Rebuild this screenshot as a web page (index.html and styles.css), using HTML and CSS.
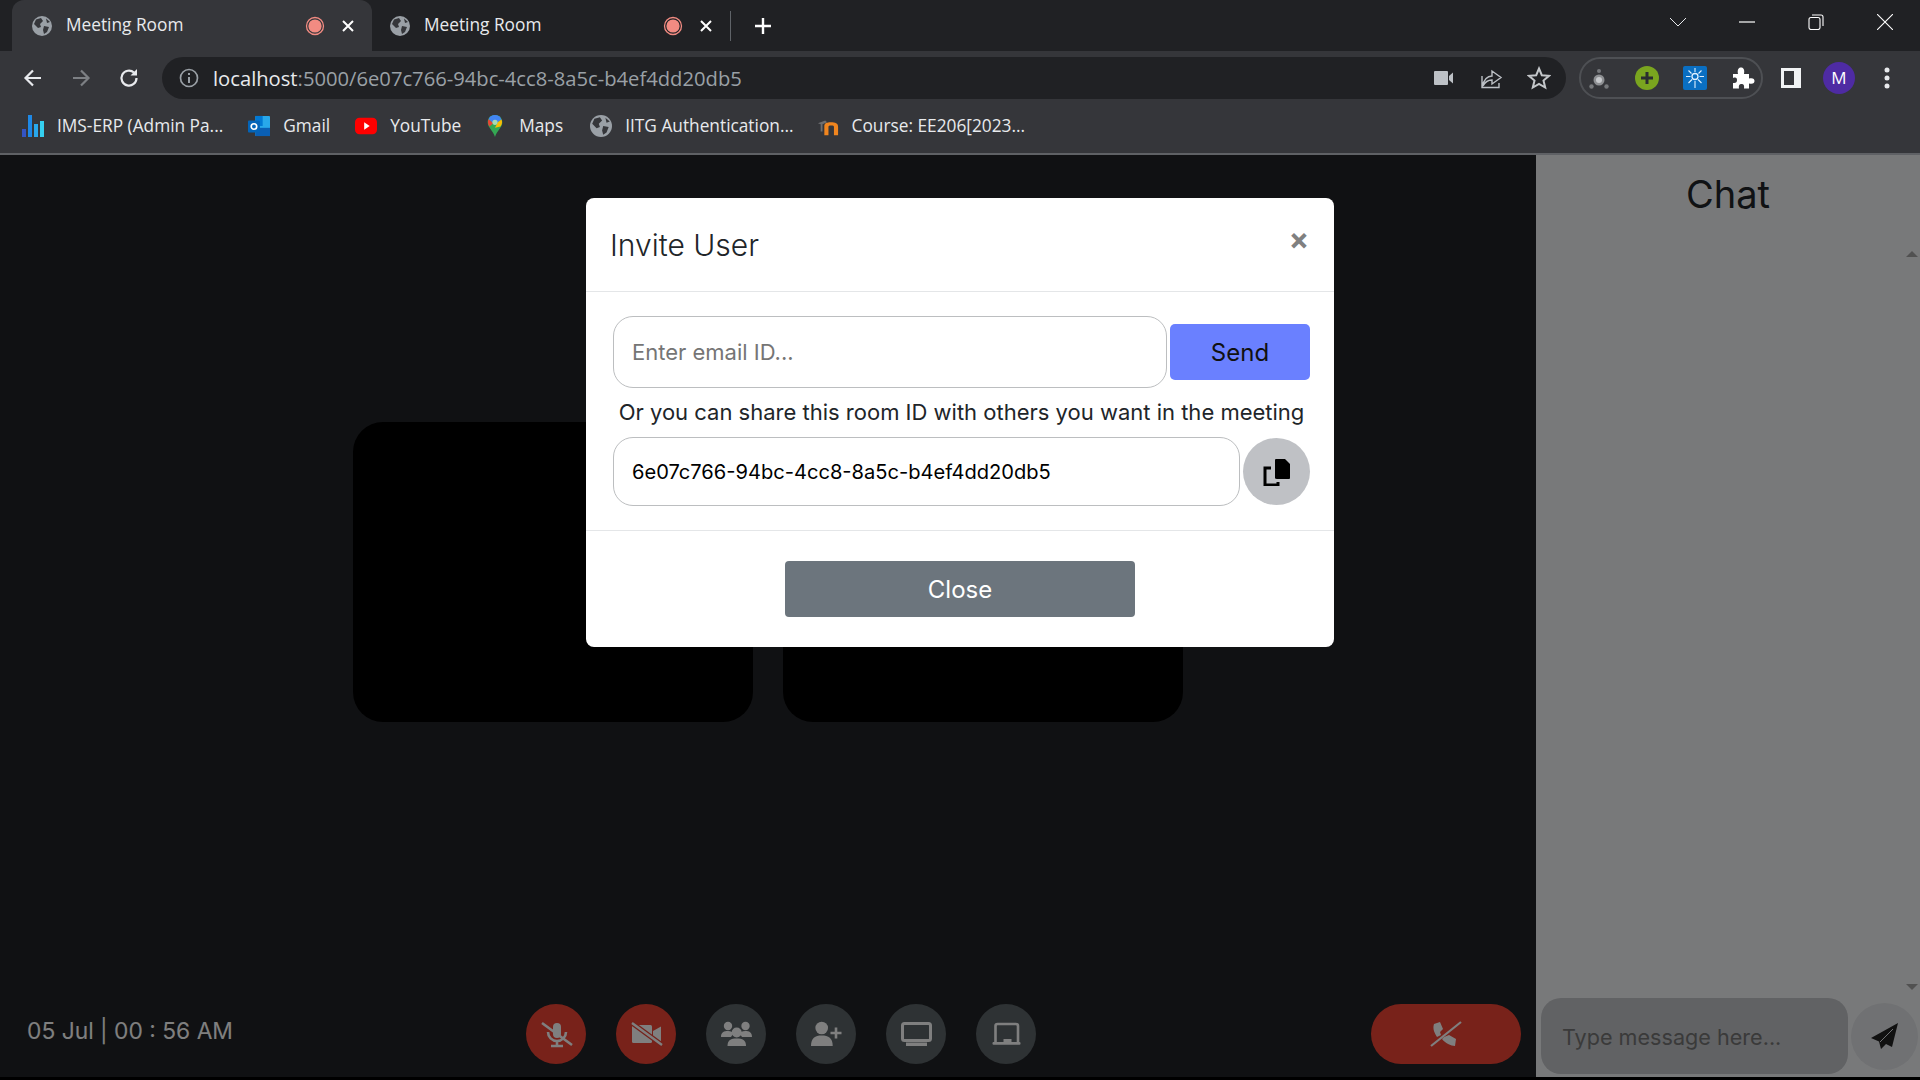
FILE: index.html
```html
<!DOCTYPE html>
<html>
<head>
    <meta charset="UTF-8">
    <title>Meeting Room</title>
    <link rel="stylesheet" href="styles.css">
</head>
<body>

<svg class="defs" width="0" height="0">
    <symbol id="globe" viewBox="0 0 20 20">
        <circle cx="10" cy="10" r="10" fill="#9aa0a6"/>
        <path d="M4 3.5 L9 2 L11 5 L8 8 L9 11 L6 12 L2 8 Z M12 10 L17 11 L15 16 L12 18 L11 14 Z M14 2.5 L18 6 L15 7 Z" fill="#35363a"/>
    </symbol>
    <symbol id="rec" viewBox="0 0 20 20">
        <circle cx="10" cy="10" r="8.5" fill="none" stroke="#f28b82" stroke-width="1.3"/>
        <circle cx="10" cy="10" r="6.6" fill="#f28b82"/>
    </symbol>
    <symbol id="tabx" viewBox="0 0 14 14">
        <path d="M2 2 L12 12 M12 2 L2 12" stroke="#fff" stroke-width="2" fill="none"/>
    </symbol>
</svg>

<div class="tabstrip">
    <div class="tab tab-active">
        <svg class="favicon"><use href="#globe"/></svg>
        <span class="tab-title">Meeting Room</span>
        <svg class="tab-rec"><use href="#rec"/></svg>
        <svg class="tab-close"><use href="#tabx"/></svg>
    </div>
    <div class="tab">
        <svg class="favicon"><use href="#globe"/></svg>
        <span class="tab-title">Meeting Room</span>
        <svg class="tab-rec"><use href="#rec"/></svg>
        <svg class="tab-close"><use href="#tabx"/></svg>
    </div>
    <div class="tab-sep"></div>
    <svg class="new-tab" viewBox="0 0 18 18"><path d="M9 1 V17 M1 9 H17" stroke="#fff" stroke-width="2.4"/></svg>
    <div class="window-btns">
        <svg class="win-btn" viewBox="0 0 16 16"><path d="M0 4 L8 12 L16 4" fill="none" stroke="#e8eaed"/></svg>
        <svg class="win-btn" viewBox="0 0 16 16"><path d="M0 8 H16" stroke="#fff" stroke-width="1.2"/></svg>
        <svg class="win-btn" viewBox="0 0 16 16"><rect x="1" y="3.5" width="11" height="12" rx="2" fill="none" stroke="#fff" stroke-width="1.1"/><path d="M4 1 H13 Q15 1 15 3 V12" fill="none" stroke="#fff" stroke-width="1.1"/></svg>
        <svg class="win-btn" viewBox="0 0 16 16"><path d="M0 0 L16 16 M16 0 L0 16" stroke="#fff" stroke-width="1.1"/></svg>
    </div>
</div>

<div class="toolbar">
    <svg class="tool-icon" viewBox="0 0 24 24"><path d="M20 12 H5 M12 4.5 L4.5 12 L12 19.500" fill="none" stroke="#e8eaed" stroke-width="2.2"/></svg>
    <svg class="tool-icon" viewBox="0 0 24 24"><path d="M4 12 H19 M12 4.5 L19.500 12 L12 19.500" fill="none" stroke="#7d8084" stroke-width="2.2"/></svg>
    <svg class="tool-icon" viewBox="0 0 24 24"><path d="M19.500 12 A7.500 7.500 0 1 1 17 6.500" fill="none" stroke="#e8eaed" stroke-width="2.2"/><path d="M20 3 V9.500 H13.500 Z" fill="#e8eaed"/></svg>
    <div class="omnibox">
        <svg class="info-icon" viewBox="0 0 20 20"><circle cx="10" cy="10" r="8.500" fill="none" stroke="#9aa0a6" stroke-width="1.700"/><path d="M10 9 V15 M10 5 V7" stroke="#9aa0a6" stroke-width="2"/></svg>
        <span class="url"><span class="url-host">localhost</span>:5000/6e07c766-94bc-4cc8-8a5c-b4ef4dd20db5</span>
        <svg class="omni-icon" viewBox="0 0 24 24"><rect x="3" y="5" width="14" height="14" rx="1" fill="#bdc1c6"/><path d="M18 10 L22 6.500 V17.500 L18 14 Z" fill="#bdc1c6"/></svg>
        <svg class="omni-icon" viewBox="0 0 24 24"><path d="M3 10 V21.500 H20 V17 M3 21 C5 13 9 10 13 10 V5 L22 11.500 L13 18 V14 C9 14 6 16 4 20" fill="none" stroke="#bdc1c6" stroke-width="1.400"/></svg>
        <svg class="omni-icon" viewBox="0 0 24 24"><path d="M12 2.500 L14.800 9.200 L22 9.800 L16.500 14.500 L18.200 21.500 L12 17.800 L5.800 21.500 L7.500 14.500 L2 9.800 L9.200 9.200 Z" fill="none" stroke="#c4c7ca" stroke-width="2"/></svg>
    </div>
    <div class="ext-pill">
        <svg class="tool-icon" viewBox="0 0 24 24"><circle cx="12" cy="14" r="5.500" fill="#8d8f92"/><circle cx="12" cy="14" r="3" fill="#c7c9cc"/><circle cx="12" cy="5" r="2" fill="#77797c"/><circle cx="4.500" cy="20.500" r="2.200" fill="#77797c"/><circle cx="19.500" cy="20.500" r="2.200" fill="#77797c"/></svg>
        <svg class="tool-icon" viewBox="0 0 24 24"><circle cx="12" cy="12" r="12" fill="#7aa51f"/><path d="M12 6 V18 M6 12 H18" stroke="#2b2d30" stroke-width="3"/></svg>
        <svg class="tool-icon" viewBox="0 0 24 24"><rect width="24" height="24" rx="2" fill="#0a6fc2"/><circle cx="12" cy="10.500" r="3" fill="none" stroke="#dff0ff" stroke-width="1.300"/><path d="M12 2 V6 M12 15 V22 M3 10.500 H7.500 M16.500 10.500 H21 M5.500 4.500 L8.500 7.500 M18.500 4.500 L15.500 7.500 M5.500 17 L9 13.500 M18.500 17 L15 13.500" stroke="#dff0ff" stroke-width="1.100"/></svg>
        <svg class="tool-icon" viewBox="0 0 24 24"><path d="M2 8 H7 C6 3 8 1.500 10 1.500 C12 1.500 14 3 13 8 H18 V12.500 C22 11.500 23.500 13 23.500 15 C23.500 17 22 18.500 18 17.500 V22.500 H13 C13.500 19 12.500 18 10.500 18 C8.500 18 7.500 19 8 22.500 H2 V17 C5 17.500 6 16 6 14 C6 12 5 11 2 12 Z" fill="#fff"/></svg>
    </div>
    <svg class="tool-icon" viewBox="0 0 24 24"><rect x="2" y="2" width="20" height="20" fill="#f1f3f4"/><rect x="5" y="5" width="10" height="14" fill="#35363a"/></svg>
    <div class="avatar">M</div>
    <svg class="tool-icon" viewBox="0 0 24 24"><circle cx="12" cy="4" r="2.500" fill="#e8eaed"/><circle cx="12" cy="12" r="2.500" fill="#e8eaed"/><circle cx="12" cy="20" r="2.500" fill="#e8eaed"/></svg>
</div>

<div class="bookmarks">
    <div class="bookmark bm-ims">
        <svg class="bm-icon" viewBox="0 0 22 22"><rect x="0" y="14" width="4" height="8" fill="#3454c4"/><rect x="6" y="0" width="4" height="22" fill="#1e88e5"/><rect x="12" y="9" width="4" height="13" fill="#29a8ec"/><rect x="18" y="6" width="4" height="16" fill="#35d0f0"/></svg>
        <span>IMS-ERP (Admin Pa...</span>
    </div>
    <div class="bookmark bm-gmail">
        <svg class="bm-icon" viewBox="0 0 24 24"><rect x="8" y="1" width="16" height="22" rx="1" fill="#28a8ea"/><rect x="8" y="1" width="8" height="11" fill="#0078d4"/><path d="M8 14 L24 14 V23 H8 Z" fill="#0a5fb4"/><rect x="0" y="6" width="13" height="13" rx="1" fill="#0364b8"/><circle cx="6.500" cy="12.500" r="3" fill="none" stroke="#fff" stroke-width="1.800"/></svg>
        <span>Gmail</span>
    </div>
    <div class="bookmark bm-yt">
        <svg class="bm-icon" viewBox="0 0 24 24"><rect y="3" width="24" height="18" rx="5" fill="#f00"/><path d="M10 8 L16 12 L10 16 Z" fill="#fff"/></svg>
        <span>YouTube</span>
    </div>
    <div class="bookmark bm-maps">
        <svg class="bm-icon" viewBox="0 0 24 24"><path d="M12 0 C6.500 0 4 4 4 8 C4 14 10 17 12 24 C14 17 20 14 20 8 C20 4 17.500 0 12 0 Z" fill="#34a853"/><path d="M12 0 C8.500 0 6 2 5 4.500 L9 8 H15 L19 5 C18 2 15.500 0 12 0 Z" fill="#4285f4"/><path d="M5 4.500 C4 6.500 4 10 6 12.500 L10 9 Z" fill="#ea4335"/><path d="M19 5 C20 7 20 10 18 12.500 L12 14 L15 8 Z" fill="#fbbc04"/><circle cx="12" cy="8" r="2.800" fill="#a8dab5"/></svg>
        <span>Maps</span>
    </div>
    <div class="bookmark bm-iitg">
        <svg class="bm-icon"><use href="#globe"/></svg>
        <span>IITG Authentication...</span>
    </div>
    <div class="bookmark bm-course">
        <svg class="bm-icon" viewBox="0 0 24 24"><path d="M8 22 V12 C8 9 11 8 15 8 C20 8 23 9 23 13 V22 H18.500 V13 C18.500 12 17.500 11.500 15.500 11.500 C13.500 11.500 12.500 12 12.500 13 V22 Z" fill="#f0851f"/><path d="M1 9 L9 6 L11 8 L6 10 V18 H4 V10 Z" fill="#6d6e70"/></svg>
        <span>Course: EE206[2023...</span>
    </div>
</div>

<div class="room">
    <div class="stage">
        <div class="tiles">
            <div class="tile"></div>
            <div class="tile"></div>
        </div>
        <div class="controls">
            <div class="clock">05 Jul | 00 : 56 AM</div>
            <div class="ctrl-group">
                <div class="ctrl ctrl-red">
                    <svg class="ctrl-icon" viewBox="0 0 60 60"><rect x="27" y="19" width="8" height="15" rx="4" fill="#fff"/><path d="M22 28 A9 9 0 0 0 40 28 M31 37 V41 M25 42 H37" fill="none" stroke="#fff" stroke-width="2.600"/><path d="M16 19 L46 41" stroke="#fff" stroke-width="2.600"/></svg>
                </div>
                <div class="ctrl ctrl-red">
                    <svg class="ctrl-icon" viewBox="0 0 60 60"><rect x="16" y="21" width="20" height="18" rx="1.500" fill="#fff"/><path d="M37 27 L45 22.500 V38 L37 34 Z" fill="#fff"/><path d="M16 19 L46 41" stroke="#ea4335" stroke-width="5"/><path d="M16 19 L46 41" stroke="#fff" stroke-width="2.400"/></svg>
                </div>
                <div class="ctrl">
                    <svg class="ctrl-icon" viewBox="0 0 60 60"><circle cx="22" cy="22" r="4.200" fill="#fff"/><circle cx="39.500" cy="22" r="4.200" fill="#fff"/><path d="M15 33 C15 28 18 27 22 27 C25 27 27 28 27 30 L25 33 Z M46 33 C46 28 43 27 39.500 27 C36 27 34 28 34 30 L36 33 Z" fill="#fff"/><circle cx="30.700" cy="28.500" r="5" fill="#fff"/><path d="M21.500 42 C21.500 36 25 34.500 30.700 34.500 C36.500 34.500 40 36 40 42 Z" fill="#fff"/></svg>
                </div>
                <div class="ctrl">
                    <svg class="ctrl-icon" viewBox="0 0 60 60"><circle cx="25.700" cy="24" r="6.300" fill="#fff"/><path d="M15 42 C15 34 19 31.500 25.700 31.500 C32.500 31.500 36.700 34 36.700 42 Z" fill="#fff"/><path d="M40 23.500 V34.500 M34.500 29 H45.500" stroke="#fff" stroke-width="2.600"/></svg>
                </div>
                <div class="ctrl">
                    <svg class="ctrl-icon" viewBox="0 0 60 60"><rect x="16.500" y="19.500" width="28" height="17" rx="2" fill="none" stroke="#fff" stroke-width="3"/><rect x="20" y="38.500" width="21" height="3.500" fill="#fff"/></svg>
                </div>
                <div class="ctrl">
                    <svg class="ctrl-icon" viewBox="0 0 60 60"><path d="M19.500 38 V22 Q19.500 20 21.500 20 H40 Q42 20 42 22 V38" fill="none" stroke="#fff" stroke-width="2.600"/><rect x="16.500" y="38" width="28" height="2.800" rx="1" fill="#fff"/><rect x="27.500" y="35" width="8" height="3" fill="#fff"/></svg>
                </div>
            </div>
            <div class="hangup">
                <svg class="hangup-icon" viewBox="0 0 32 26"><path d="M4 3 L10 1 L13 8 L10 11 L11 14 L7 16 C3 10 3 6 4 3 Z M12 18 L14 16 L19 14 L26 18 L25 25 C21 25 15 22 12 18 Z" fill="#fff"/><path d="M31 1 L1 25" stroke="#fff" stroke-width="2.200"/></svg>
            </div>
        </div>
    </div>

    <div class="chat">
        <h1 class="chat-title">Chat</h1>
        <div class="chat-list">
            <div class="scroll-track">
                <div class="arrow-up"></div>
                <div class="arrow-down"></div>
            </div>
        </div>
        <div class="chat-bar">
            <input class="chat-input" type="text" placeholder="Type message here...">
            <div class="chat-send">
                <svg class="send-icon" viewBox="0 0 27 26"><path d="M27 0 L0 15 L8 18.500 L10 26 L15 21 L21 24 Z" fill="#222"/><path d="M22 6 L9 19" stroke="#e0e2e6" stroke-width="1"/></svg>
            </div>
        </div>
    </div>

    <div class="backdrop">
        <div class="modal">
            <div class="modal-header">
                <div class="modal-title">Invite User</div>
                <div class="modal-close">&times;</div>
            </div>
            <div class="modal-body">
                <div class="invite-row">
                    <input class="email-input" type="text" placeholder="Enter email ID...">
                    <button class="send-btn">Send</button>
                </div>
                <p class="share-text">Or you can share this room ID with others you want in the meeting</p>
                <div class="room-row">
                    <input class="room-input" type="text" value="6e07c766-94bc-4cc8-8a5c-b4ef4dd20db5" readonly>
                    <div class="copy-btn">
                        <svg class="copy-icon" viewBox="0 0 28 28"><path d="M13 1 H22 L27 6 V20 Q27 21 26 21 H14 Q12 21 12 20 V2 Q12 1 13 1 Z" fill="#000"/><path d="M8 10 H2 V27 H15 V24" fill="none" stroke="#000" stroke-width="3"/></svg>
                    </div>
                </div>
            </div>
            <div class="modal-footer">
                <button class="close-btn">Close</button>
            </div>
        </div>
    </div>
</div>

</body>
</html>
```

FILE: styles.css
```css
* {
    margin: 0;
    padding: 0;
    box-sizing: border-box;
}
html, body {
    height: 100%;
}
body {
    display: flex;
    flex-direction: column;
    overflow: hidden;
    padding-bottom: 3px;
    background: #000;
    font-family: Inter, "Liberation Sans", sans-serif;
}
.defs {
    position: absolute;
}

/* browser chrome */
.tabstrip, .toolbar, .bookmarks {
    font-family: "Open Sans", "Noto Sans", sans-serif;
    color: #e8eaed;
    flex: none;
    display: flex;
    align-items: center;
}
.tabstrip {
    height: 51px;
    background: #202124;
    padding-left: 12px;
}
.tab {
    width: 360px;
    height: 51px;
    display: flex;
    align-items: center;
    padding-left: 20px;
    border-radius: 12px 12px 0 0;
    flex: none;
}
.tab + .tab {
    width: 358px;
    padding-left: 18px;
}
.tab-active {
    background: #35363a;
}
.favicon {
    width: 20px;
    height: 20px;
    flex: none;
}
.tab-title {
    margin-left: 14px;
    margin-bottom: 2px;
    width: 239px;
    font-size: 17.3px;
    white-space: nowrap;
}
.tab-rec {
    width: 20px;
    height: 20px;
    flex: none;
}
.tab-close {
    width: 14px;
    height: 14px;
    margin-left: 16px;
    flex: none;
}
.tab-sep {
    width: 1px;
    height: 30px;
    background: #5f6368;
    flex: none;
}
.new-tab {
    width: 18px;
    height: 18px;
    margin-left: 23px;
    flex: none;
}
.window-btns {
    margin-left: auto;
    margin-right: 27px;
    margin-top: -8px;
    display: flex;
    gap: 53px;
}
.win-btn {
    width: 16px;
    height: 16px;
}
.toolbar {
    height: 52px;
    background: #35363a;
    padding-left: 21px;
    padding-top: 2px;
}
.tool-icon {
    width: 24px;
    height: 24px;
    flex: none;
    margin-right: 24px;
}
.omnibox {
    width: 1404px;
    height: 42px;
    margin-left: -3px;
    margin-right: 13px;
    padding: 0 15px 0 17px;
    border-radius: 21px;
    background: #202124;
    display: flex;
    align-items: center;
    flex: none;
}
.info-icon {
    width: 20px;
    height: 20px;
    flex: none;
}
.url {
    margin-left: 14px;
    font-size: 20.2px;
    color: #9aa0a6;
    white-space: nowrap;
    flex: 1;
}
.url-host {
    color: #e8eaed;
}
.omni-icon {
    width: 24px;
    height: 24px;
    margin-left: 24px;
    flex: none;
}
.ext-pill {
    width: 184px;
    height: 42px;
    padding-left: 6px;
    border: 2px solid #4e5054;
    border-radius: 21px;
    display: flex;
    align-items: center;
    flex: none;
    margin-right: 16px;
}
.avatar {
    width: 32px;
    height: 32px;
    margin-left: -4px;
    margin-right: 20px;
    border-radius: 50%;
    background: #4e2ba3;
    color: #fff;
    font-size: 17px;
    line-height: 32px;
    text-align: center;
    flex: none;
}
.bookmarks {
    height: 52px;
    background: #35363a;
    border-bottom: 2px solid #5f6165;
    padding-left: 22px;
    padding-bottom: 5px;
}
.bookmark {
    display: flex;
    align-items: center;
    gap: 13px;
    font-size: 17.3px;
    white-space: nowrap;
    flex: none;
}
.bm-icon {
    width: 22px;
    height: 22px;
    flex: none;
}
.bm-gmail, .bm-yt {
    margin-left: 25px;
}
.bm-maps {
    margin-left: 23px;
}
.bm-iitg {
    margin-left: 27px;
}
.bm-course {
    margin-left: 23px;
}

/* meeting room */
.room {
    position: relative;
    flex: 1;
    display: flex;
    min-height: 0;
}
.stage {
    flex: 1;
    display: flex;
    flex-direction: column;
    background: #202226;
}
.tiles {
    flex: 1;
    display: flex;
    justify-content: center;
    align-items: center;
    gap: 30px;
}
.tile {
    width: 400px;
    height: 300px;
    border-radius: 30px;
    background: #000;
}
.controls {
    height: 88px;
    display: flex;
    align-items: flex-start;
    padding: 15px 15px 0 27px;
    flex: none;
}
.clock {
    width: 499px;
    height: 60px;
    line-height: 54px;
    font-size: 22.8px;
    color: #fff;
    white-space: nowrap;
    flex: none;
}
.ctrl-group {
    display: flex;
    gap: 30px;
}
.ctrl {
    width: 60px;
    height: 60px;
    border-radius: 50%;
    background: #5c6468;
}
.ctrl-red {
    background: #f04434;
}
.ctrl-icon {
    width: 60px;
    height: 60px;
    display: block;
}
.hangup {
    width: 150px;
    height: 60px;
    margin-left: auto;
    border-radius: 30px;
    background: #f04434;
    display: flex;
    justify-content: center;
    align-items: center;
}
.hangup-icon {
    width: 32px;
    height: 26px;
}
.chat {
    width: 384px;
    flex: none;
    display: flex;
    flex-direction: column;
    background: #f1f3f5;
}
.chat-title {
    height: 91px;
    padding-top: 16px;
    font-size: 38px;
    font-weight: 400;
    text-align: center;
    color: #212529;
}
.chat-list {
    flex: 1;
    display: flex;
    justify-content: flex-end;
    min-height: 0;
}
.scroll-track {
    width: 17px;
    display: flex;
    flex-direction: column;
    justify-content: space-between;
    align-items: center;
    padding: 5px 0 6px;
}
.arrow-up, .arrow-down {
    width: 0;
    height: 0;
    border-left: 6px solid transparent;
    border-right: 6px solid transparent;
}
.arrow-up {
    border-bottom: 6px solid #a3a3a3;
}
.arrow-down {
    border-top: 6px solid #a3a3a3;
}
.chat-bar {
    display: flex;
    align-items: center;
    height: 81px;
    padding: 2px 2px 3px 5px;
    gap: 3px;
    flex: none;
}
.chat-input {
    width: 307px;
    height: 76px;
    padding: 2px 0 0 21px;
    border: none;
    border-radius: 20px;
    background: #c2c4c8;
    font-family: Inter, sans-serif;
    font-size: 21.6px;
}
.chat-input::placeholder {
    color: #757575;
}
.chat-send {
    width: 67px;
    height: 67px;
    border-radius: 50%;
    background: #e0e2e6;
    display: flex;
    justify-content: center;
    align-items: center;
    flex: none;
}
.send-icon {
    width: 27px;
    height: 26px;
}

/* invite dialog */
.backdrop {
    position: absolute;
    top: 0;
    left: 0;
    right: 0;
    bottom: 0;
    padding-top: 43px;
    display: flex;
    justify-content: center;
    align-items: flex-start;
    background: rgba(0, 0, 0, 0.5);
}
.modal {
    width: 748px;
    background: #fff;
    border-radius: 8px;
    color: #212529;
}
.modal-header {
    height: 94px;
    padding: 0 24px;
    display: flex;
    justify-content: space-between;
    align-items: center;
    border-bottom: 1px solid #e4e6e8;
}
.modal-title {
    font-size: 30px;
    font-weight: 300;
}
.modal-close {
    font-size: 30px;
    font-weight: 700;
    color: #808080;
    margin-bottom: 12px;
    margin-right: 1px;
}
.modal-body {
    padding: 24px 24px 24px 27px;
}
.invite-row, .room-row {
    display: flex;
    align-items: center;
}
.invite-row {
    gap: 3px;
}
.room-row {
    gap: 3px;
}
.email-input, .room-input {
    height: 72px;
    padding-left: 18px;
    border: 1px solid #bcbec0;
    border-radius: 20px;
    background: #fff;
    font-family: Inter, sans-serif;
    font-size: 22px;
    flex: 1;
    min-width: 0;
}
.email-input::placeholder {
    color: #757575;
}
.room-input {
    height: 69px;
    font-size: 20.1px;
    color: #000;
}
.send-btn {
    width: 140px;
    height: 56px;
    border: none;
    border-radius: 5px;
    background: #6a80ff;
    color: #111;
    font-family: Inter, sans-serif;
    font-size: 24px;
    flex: none;
}
.share-text {
    height: 49px;
    line-height: 49px;
    font-size: 22px;
    text-align: center;
    white-space: nowrap;
}
.copy-btn {
    width: 67px;
    height: 67px;
    border-radius: 50%;
    background: #bfc1c5;
    display: flex;
    justify-content: center;
    align-items: center;
    flex: none;
}
.copy-icon {
    width: 28px;
    height: 28px;
}
.modal-footer {
    height: 117px;
    padding-top: 30px;
    display: flex;
    justify-content: center;
    align-items: flex-start;
    border-top: 1px solid #e4e6e8;
}
.close-btn {
    width: 350px;
    height: 56px;
    border: none;
    border-radius: 4px;
    background: #6c757d;
    color: #fff;
    font-family: Inter, sans-serif;
    font-size: 24px;
}
```
